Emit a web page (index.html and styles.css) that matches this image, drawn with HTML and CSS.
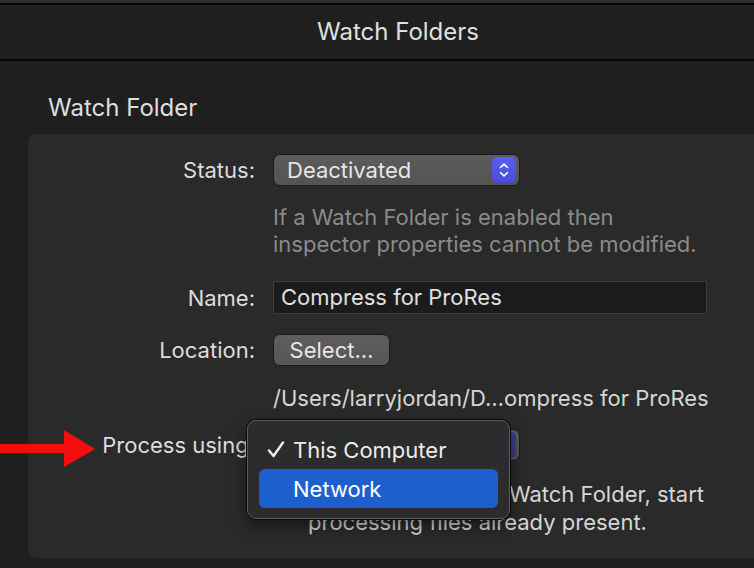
FILE: index.html
```
<!DOCTYPE html>
<html>

<head>
  <title>Watch Folders</title>
  <link rel="stylesheet" href="styles.css">
</head>

<body>
  <div class="titlebar">Watch Folders</div>

  <h2 class="section-title">Watch Folder</h2>

  <div class="panel">
    <div class="row">
      <label class="label">Status:</label>
      <div class="popup">
        <span>Deactivated</span>
        <span class="stepper">
          <svg width="12" height="18" viewBox="0 0 12 18"><path d="M2.5 6.5 L6 3 L9.5 6.5 M2.5 11.5 L6 15 L9.5 11.5" fill="none" stroke="#fff" stroke-width="1.6" stroke-linecap="round" stroke-linejoin="round"/></svg>
        </span>
      </div>
    </div>

    <p class="help">If a Watch Folder is enabled then<br>inspector properties cannot be modified.</p>

    <div class="row row-name">
      <label class="label">Name:</label>
      <div class="field">Compress for ProRes</div>
    </div>

    <div class="row">
      <label class="label">Location:</label>
      <button class="button">Select…</button>
    </div>

    <div class="row row-path">
      <span class="label"></span>
      <span class="path">/Users/larryjordan/D…ompress for ProRes</span>
    </div>

    <div class="row row-process">
      <label class="label">Process using:</label>
      <div class="popup-wrap">
        <div class="popup">
          <span>This Computer</span>
          <span class="stepper dim">
            <svg width="12" height="18" viewBox="0 0 12 18"><path d="M2.5 6.5 L6 3 L9.5 6.5 M2.5 11.5 L6 15 L9.5 11.5" fill="none" stroke="#fff" stroke-width="1.6" stroke-linecap="round" stroke-linejoin="round"/></svg>
          </span>
        </div>
        <!-- open menu -->
        <div class="menu">
          <div class="menu-item">
            <span class="check">
              <svg width="18" height="17" viewBox="0 0 18 17"><path d="M2 9.5 L6.5 15 L16 1.5" fill="none" stroke="#f0f0f0" stroke-width="2.4" stroke-linecap="round" stroke-linejoin="round"/></svg>
            </span>This Computer
          </div>
          <div class="menu-item selected"><span class="check"></span>Network</div>
        </div>
      </div>
    </div>

    <div class="row row-check">
      <span class="label"></span>
      <div class="checkline">
        <span class="checkbox"></span>
        <p class="check-text">When enabling the Watch Folder, start<br>processing files already present.</p>
      </div>
    </div>
  </div>

  <svg class="arrow" width="96" height="40" viewBox="0 0 96 40">
    <polygon points="0,15 64,15 64,1 95,20 64,38 64,24 0,24" fill="#f30d0d"/>
  </svg>
</body>

</html>
```

FILE: styles.css
```
body {
  font-family: Inter, "Noto Sans", sans-serif;
  background-color: #1f1f1f;
  color: #dcdcdc;
  margin: 0;
  padding: 0;
  width: 754px;
  height: 568px;
  overflow: hidden;
  position: relative;
  border-top: 3px solid #2e2e2e;
  box-sizing: border-box;
}

.titlebar {
  height: 54px;
  border-top: 2px solid #050505;
  border-bottom: 2px solid #050505;
  padding-left: 42px;
  text-align: center;
  line-height: 54px;
  font-size: 24px;
  color: #e0e0e0;
}

.section-title {
  margin: 0;
  padding: 34px 0 0 48px;
  height: 39px;
  font-size: 24px;
  font-weight: normal;
  line-height: 26px;
  color: #dedede;
}

.panel {
  margin-left: 28px;
  background-color: #2a2a2a;
  border-radius: 8px 0 0 8px;
  height: 424px;
  padding-top: 20px;
  box-sizing: border-box;
}

.row {
  display: flex;
  align-items: center;
  gap: 18px;
  font-size: 22px;
}

.label {
  width: 227px;
  flex: none;
  text-align: right;
  color: #dcdcdc;
}

.popup-wrap {
  position: relative;
}

.popup {
  width: 247px;
  height: 32px;
  box-sizing: border-box;
  background: linear-gradient(#5c5c5c, #535353);
  border: 1px solid #1a1a1a;
  border-radius: 7px;
  display: flex;
  align-items: center;
  justify-content: space-between;
  padding: 0 3px 0 13px;
  color: #e6e6e6;
}

.stepper {
  width: 24px;
  height: 26px;
  border-radius: 5px;
  background: linear-gradient(#5a5ef0, #4a4dd8);
  display: flex;
  align-items: center;
  justify-content: center;
}

.stepper.dim {
  background: #3b3d92;
}

.help {
  margin: 18px 0 0 245px;
  font-size: 22px;
  line-height: 27px;
  color: #8a8a8a;
}

.row-name {
  margin-top: 23px;
}

.field {
  width: 434px;
  height: 33px;
  box-sizing: border-box;
  background-color: #1b1b1b;
  border: 1px solid #3c3c3c;
  padding: 0 7px;
  line-height: 31px;
  color: #e0e0e0;
}

.row + .row {
  margin-top: 20px;
}

.button {
  width: 117px;
  height: 32px;
  background: linear-gradient(#5e5e5e, #565656);
  border: 1px solid #1a1a1a;
  border-radius: 7px;
  color: #e6e6e6;
  font-family: inherit;
  font-size: 22px;
  padding: 0;
}

.row-path {
  margin-top: 19px !important;
  line-height: 26px;
}

.path {
  color: #d6d6d6;
  white-space: nowrap;
}

.row-process {
  margin-top: 18px !important;
}

.menu {
  position: absolute;
  left: -26px;
  top: -9px;
  width: 263px;
  height: 99px;
  box-sizing: border-box;
  padding: 9px 11px 11px;
  background-color: #2c2c2e;
  border: 1px solid #5c5c5e;
  border-radius: 9px;
  box-shadow: 0 0 0 1px #0a0a0a, 0 6px 16px rgba(0, 0, 0, 0.5);
}

.menu-item {
  height: 39px;
  display: flex;
  align-items: center;
  padding-left: 8px;
  border-radius: 6px;
  color: #ececec;
  font-size: 22px;
}

.menu-item.selected {
  background-color: #1d5fcd;
  color: #fff;
}

.check {
  width: 26px;
  height: 17px;
  display: flex;
}

.row-check {
  margin-top: 19px !important;
  align-items: flex-start;
}

.checkline {
  display: flex;
  gap: 17px;
}

.checkbox {
  width: 18px;
  height: 18px;
  margin-top: 5px;
  border-radius: 4px;
  background-color: #5a5a5a;
}

.check-text {
  margin: 0;
  line-height: 28px;
  color: #d6d6d6;
  white-space: nowrap;
}

.arrow {
  position: absolute;
  left: 0;
  top: 426px;
}
```
